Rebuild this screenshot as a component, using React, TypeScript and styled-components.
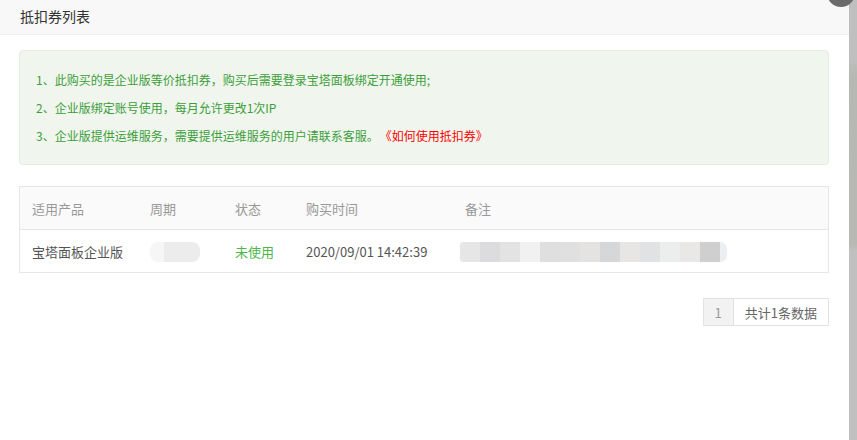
import React from "react";
import styled, { createGlobalStyle } from "styled-components";

const GlobalStyle = createGlobalStyle`
  html, body {
    margin: 0;
    padding: 0;
    background: #fff;
  }
  body {
    font-family: "Noto Sans CJK SC", "Open Sans", sans-serif;
    overflow: hidden;
  }
`;

const Page = styled.div`
  display: flex;
  width: 857px;
  height: 440px;
  overflow: hidden;
`;

const Modal = styled.div`
  position: relative;
  width: 849px;
  height: 440px;
  background: #fff;
  display: flex;
  flex-direction: column;
`;

const Shade = styled.div`
  flex: 1;
  background: linear-gradient(
    to bottom,
    #bfbfbf 0,
    #bfbfbf 59px,
    #b6b8b3 75px,
    #b8b9b4 245px,
    #c0c0c0 250px,
    #c0c0c0 440px
  );
`;

const CloseDot = styled.div`
  position: absolute;
  right: -6px;
  top: -21px;
  width: 28px;
  height: 28px;
  border-radius: 50%;
  background: #6b6b6b;
`;

const Header = styled.div`
  height: 35px;
  flex-shrink: 0;
  background: #f8f8f8;
  border-bottom: 1px solid #eee;
  display: flex;
  align-items: center;
  padding: 0 20px 3px;
  font-size: 14px;
  color: #333;
  box-sizing: border-box;
`;

const Body = styled.div`
  padding: 15px 20px 0 19px;
  display: flex;
  flex-direction: column;
`;

const Notice = styled.div`
  background: #f0f6ee;
  border: 1px solid #e4eedf;
  border-radius: 4px;
  padding: 19px 16px 18px;
  display: flex;
  flex-direction: column;
  gap: 8px;
`;

const NoticeLine = styled.div`
  font-size: 12px;
  line-height: 20px;
  color: #3c9e3a;
`;

const Link = styled.span`
  margin-left: 7px;
  color: #ff0000;
`;

const Table = styled.div`
  margin-top: 21px;
  border: 1px solid #e6e6e6;
`;

const Row = styled.div<{ $head?: boolean }>`
  display: grid;
  grid-template-columns: 118px 85px 71px 159px 1fr;
  height: 42px;
  align-items: center;
  padding-left: 12px;
  background: ${(p) => (p.$head ? "#fafafa" : "#fff")};
  border-bottom: ${(p) => (p.$head ? "1px solid #e6e6e6" : "none")};
  font-size: 13px;
  color: ${(p) => (p.$head ? "#999" : "#555")};
`;

const Cell = styled.div<{ $green?: boolean }>`
  color: ${(p) => (p.$green ? "#4cb64c" : "inherit")};
  white-space: nowrap;
`;

const Blur = styled.div`
  display: flex;
  height: 20px;
  margin-top: 2px;
`;

const BlurBlock = styled.div<{ $w: number; $c: string; $round?: string }>`
  width: ${(p) => p.$w}px;
  height: 20px;
  background: ${(p) => p.$c};
  border-radius: ${(p) => p.$round || "0"};
`;

const Pager = styled.div`
  margin-top: 25px;
  align-self: flex-end;
  display: flex;
  border: 1px solid #e2e2e2;
  font-size: 13px;
  color: #666;
  height: 26px;
`;

const PageCell = styled.div<{ $current?: boolean }>`
  display: flex;
  align-items: center;
  justify-content: center;
  padding: 0 11px;
  background: ${(p) => (p.$current ? "#f2f2f2" : "#fff")};
  border-right: ${(p) => (p.$current ? "1px solid #e2e2e2" : "none")};
  color: ${(p) => (p.$current ? "#999" : "#666")};
`;

const remarkBlocks = [
  { w: 20, c: "#e6e6e6", r: "3px 0 0 3px" },
  { w: 20, c: "#dcdcde" },
  { w: 20, c: "#e3e3e3" },
  { w: 20, c: "#f1f1f1" },
  { w: 20, c: "#dfdfdf" },
  { w: 20, c: "#e0e0e0" },
  { w: 20, c: "#e4e3e1" },
  { w: 20, c: "#d6d7d9" },
  { w: 20, c: "#e8e6e4" },
  { w: 20, c: "#e1e2e4" },
  { w: 20, c: "#eceeed" },
  { w: 20, c: "#e9e8e6" },
  { w: 20, c: "#cfcfcf" },
  { w: 7, c: "#eceff2", r: "0 10px 10px 0" },
];

export default function App() {
  return (
    <Page>
      <GlobalStyle />
      <Modal>
        <CloseDot />
        <Header>抵扣券列表</Header>
        <Body>
          <Notice>
            <NoticeLine>1、此购买的是企业版等价抵扣券，购买后需要登录宝塔面板绑定开通使用;</NoticeLine>
            <NoticeLine>2、企业版绑定账号使用，每月允许更改1次IP</NoticeLine>
            <NoticeLine>
              3、企业版提供运维服务，需要提供运维服务的用户请联系客服。<Link>《如何使用抵扣券》</Link>
            </NoticeLine>
          </Notice>
          <Table>
            <Row $head>
              <Cell>适用产品</Cell>
              <Cell>周期</Cell>
              <Cell>状态</Cell>
              <Cell>购买时间</Cell>
              <Cell>备注</Cell>
            </Row>
            <Row>
              <Cell>宝塔面板企业版</Cell>
              <Cell>
                <Blur>
                  <BlurBlock $w={14} $c="#f6f6f6" $round="8px 0 0 8px" />
                  <BlurBlock $w={36} $c="#ececec" $round="0 8px 8px 0" />
                </Blur>
              </Cell>
              <Cell $green>未使用</Cell>
              <Cell>2020/09/01 14:42:39</Cell>
              <Cell>
                <Blur style={{ marginLeft: -5 }}>
                  {remarkBlocks.map((b, i) => (
                    <BlurBlock key={i} $w={b.w} $c={b.c} $round={b.r} />
                  ))}
                </Blur>
              </Cell>
            </Row>
          </Table>
          <Pager>
            <PageCell $current>1</PageCell>
            <PageCell>共计1条数据</PageCell>
          </Pager>
        </Body>
      </Modal>
      <Shade />
    </Page>
  );
}
